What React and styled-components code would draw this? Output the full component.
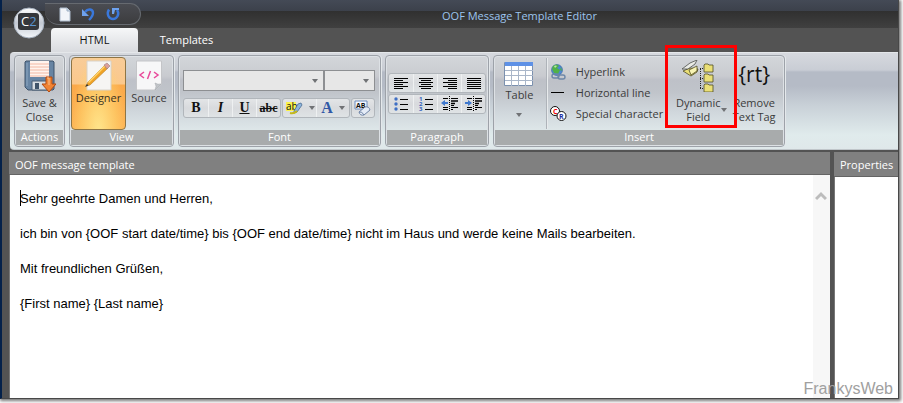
import {useState} from "react";
import styled, {createGlobalStyle, css} from "styled-components";

const GlobalStyle = createGlobalStyle`
  * {
    box-sizing: border-box;
  }

  body {
    margin: 0;
    background: #fff;
    font-family: "Open Sans", "Noto Sans", sans-serif;
    font-size: 11px;
    color: #3b3b3b;
    overflow: hidden;
  }

  button, select, textarea {
    margin: 0;
    padding: 0;
    border: 0;
    background: none;
    font: inherit;
    color: inherit;
  }

  svg {
    display: block;
    flex: none;
  }
`

const Desktop = styled.div`
  height: 100vh;
  padding: 0 4px 4px 0;
`

const Window = styled.div`
  position: relative;
  display: flex;
  flex-direction: column;
  height: 100%;
  border-left: 2px solid #04214a;
  border-right: 1px solid #484848;
  border-bottom: 1px solid #484848;
  background: #535353;
  box-shadow: 1px 1px 3px 1px #777;
`

const TitleBar = styled.header`
  display: flex;
  height: 28px;
  padding-left: 43px;
  background: linear-gradient(#444a56 0, #3c414b 11px, #303030 11px, #404040 28px);
`

const Orb = styled.button`
  position: absolute;
  left: 11px;
  top: 7px;
`

const QuickAccess = styled.div`
  display: flex;
  align-items: center;
  gap: 9px;
  width: 96px;
  height: 22px;
  margin-top: 3px;
  padding-left: 14px;
  border: 1px solid #666a70;
  border-left: 0;
  border-radius: 0 11px 11px 14px;
  background: linear-gradient(#4a4c52, #3c3c3e);
`

const Title = styled.h1`
  flex: 1;
  margin: 0;
  font-size: 11px;
  font-weight: 400;
  line-height: 32px;
  text-align: center;
  color: #9cc4ee;
`

const TabRow = styled.nav`
  display: flex;
  height: 24px;
  padding-left: 49px;
`

const Tab = styled.button`
  width: 87px;
  height: 24px;
  padding-bottom: 1px;
  border-radius: 4px 4px 0 0;
  color: ${(props) => (props.$active ? "#111" : "#fff")};
  background: ${(props) => (props.$active ? "linear-gradient(#f6f7f8, #d9dbdf)" : "none")};
  margin-right: 5px;
`

const Ribbon = styled.div`
  display: flex;
  gap: 4px;
  height: 98px;
  margin-left: 8px;
  padding: 2px 4px;
  border-top: 1px solid #e4e7ea;
  border-bottom: 1px solid #c0c6ca;
  border-radius: 4px 0 0 4px;
  background: linear-gradient(#d6d9de 0, #c9cdd5 17px, #b5bbc6 19px, #b5bbc6 33px, #c8d0d7 52px, #e0ebec 82px, #dfe8ea 100%);
`

const GroupBox = styled.section`
  display: flex;
  flex-direction: column;
  width: ${(props) => props.$width}px;
  flex: none;
  border: 1px solid #9da2a9;
  border-radius: 4px;
  box-shadow: inset 0 0 0 1px #dde1e5, 1px 0 0 #e4e8eb;
  background: linear-gradient(#d3d6da 0, #c9cbd0 20px, #bec1c8 24px, #c0c4ca 36px, #d0d7dc 56px, #dfe8ea 76px);
`

const GroupContent = styled.div`
  flex: 1;
  display: flex;
  padding: ${(props) => props.$padding || "1px 1px 0"};
`

const GroupLabel = styled.h2`
  height: 15px;
  margin: 0 1px 1px;
  font-size: 11px;
  font-weight: 400;
  line-height: 14px;
  text-align: center;
  color: #fff;
  background: #a8abac;
`

const BigButton = styled.button`
  display: flex;
  flex-direction: column;
  align-items: center;
  gap: ${(props) => (props.$twoLines ? 4 : 0)}px;
  width: ${(props) => props.$width}px;
  padding-top: 3px;
  line-height: 14px;
  white-space: nowrap;
  ${(props) => props.$active && css`
    border: 1px solid #8e7545;
    border-radius: 4px;
    padding-top: 2px;
    color: #3b3220;
    background: radial-gradient(ellipse at 50% 105%, #ffe68c 0, rgba(255, 214, 110, 0.5) 50%, transparent 75%),
      linear-gradient(#f8cc98 0, #fbc88c 26px, #fba94a 27px, #fdb355 100%);
  `}
`

const BigLabel = styled.span`
  position: relative;
`

const SideArrow = styled.span`
  position: absolute;
  right: -6px;
  top: 12px;
`

const TableArrow = styled.span`
  margin-top: 11px;
`

const FontRows = styled.div`
  display: flex;
  flex-direction: column;
  gap: 7px;
`

const Row = styled.div`
  display: flex;
  gap: ${(props) => props.$gap || 0}px;
`

const ComboBox = styled.label`
  position: relative;
  width: ${(props) => props.$width}px;
  height: 21px;
`

const Select = styled.select`
  appearance: none;
  width: 100%;
  height: 100%;
  border: 1px solid #8d8f92;
  border-radius: 0;
  background: #e7e7e7;
`

const ComboArrow = styled.span`
  position: absolute;
  right: 6px;
  top: 9px;
  pointer-events: none;
`

const Segment = styled.div`
  display: flex;
  height: 20px;
  border: 1px solid #b1b6bb;
  border-radius: 3px;
  background: linear-gradient(#e3e5e7, #d8dadd 50%, #dfe3e5);
`

const SmallButton = styled.button`
  display: flex;
  align-items: center;
  justify-content: center;
  gap: 6px;
  width: ${(props) => props.$width || 24}px;

  & + & {
    border-left: 1px solid #eef0f1;
  }
`

const Letter = styled.span`
  font-family: "Liberation Serif", serif;
  font-size: ${(props) => props.$size || 14}px;
  line-height: 16px;
  font-weight: 700;
  font-style: ${(props) => (props.$italic ? "italic" : "normal")};
  text-decoration: ${(props) => props.$line || "none"};
  color: ${(props) => props.$color || "#111"};
`

const ParagraphRows = styled.div`
  display: flex;
  flex-direction: column;
  gap: 1px;
`

const Separator = styled.div`
  flex: none;
  width: 2px;
  height: 71px;
  margin: 1px 2px 0 6px;
  border-left: 1px solid #aeb3b9;
  background: #e7eaec;
`

const InsertList = styled.div`
  display: flex;
  flex-direction: column;
  width: 115px;
  padding-top: 4px;
`

const InsertItem = styled.button`
  display: flex;
  align-items: center;
  gap: 9px;
  height: 21px;
  white-space: nowrap;
`

const Highlighted = styled.div`
  position: relative;
  display: flex;
  margin-left: 8px;
`

const RedFrame = styled.div`
  position: absolute;
  left: -7px;
  top: -12px;
  z-index: 1;
  width: 72px;
  height: 83px;
  border: 3px solid #f00;
  pointer-events: none;
`

const Tag = styled.span`
  height: 32px;
  font-size: 21px;
  font-weight: 500;
  line-height: 28px;
  color: #111;
`

const Panels = styled.main`
  flex: 1;
  display: flex;
  gap: 4px;
  min-height: 0;
  padding: 2px 0 0 7px;
`

const Panel = styled.section`
  display: flex;
  flex-direction: column;
  flex: ${(props) => (props.$width ? `0 0 ${props.$width}px` : "1")};
  min-width: 0;
`

const PanelTitle = styled.h2`
  height: ${(props) => props.$height}px;
  margin: 0;
  padding-left: 6px;
  border-bottom: 1px solid #646464;
  font-size: 11px;
  font-weight: 400;
  line-height: 26px;
  color: #fff;
  background: #808080;
  white-space: nowrap;
`

const PanelBody = styled.div`
  position: relative;
  flex: 1;
  display: flex;
  min-height: 0;
  border-left: 1px solid #777;
  background: #fff;
`

const Message = styled.textarea`
  flex: 1;
  padding: 6px 10px;
  border: 0;
  outline: 0;
  resize: none;
  overflow: hidden;
  font-family: "Liberation Sans", Arial, sans-serif;
  font-size: 13px;
  line-height: 35px;
  color: #000;
`

const Caret = styled.span`
  position: absolute;
  left: 10px;
  top: 15px;
  width: 1px;
  height: 16px;
  background: #000;
`

const ScrollTrack = styled.div`
  width: 17px;
  padding: 16px 0 0 2px;
  background: #f7f7f7;
`

const Watermark = styled.div`
  position: absolute;
  right: 5px;
  bottom: 0;
  font-family: "Liberation Sans", Arial, sans-serif;
  font-size: 16px;
  line-height: 18px;
  color: #a0a0a0;
`

const Arrow = () => (
    <svg width="6" height="4" viewBox="0 0 6 4">
        <path d="M0 0h6L3 4z" fill="#707275"/>
    </svg>
);

const OrbIcon = () => (
    <svg width="32" height="32" viewBox="0 0 32 32">
        <defs>
            <linearGradient id="orb" x1="0" y1="0" x2="0" y2="1">
                <stop offset="0" stopColor="#fff"/>
                <stop offset=".5" stopColor="#c3c9d2"/>
                <stop offset="1" stopColor="#f4f7fb"/>
            </linearGradient>
        </defs>
        <circle cx="16" cy="16" r="15" fill="url(#orb)" stroke="#a5b0be"/>
        <rect x="5" y="6" width="21" height="17" rx="3" fill="#35373b"/>
        <text x="8" y="19" fontSize="13" fontFamily="Open Sans, sans-serif" fill="#fff">
            C<tspan fill="#5b95d1">2</tspan>
        </text>
    </svg>
);

const NewIcon = () => (
    <svg width="12" height="16" viewBox="0 0 12 16">
        <path d="M1 2h7l3 3v10H1z" fill="#f2f5f9" stroke="#aebccd"/>
        <path d="M8 2v3h3" fill="#cbd6e2" stroke="#9eb0c4"/>
    </svg>
);

const UndoIcon = () => (
    <svg width="16" height="16" viewBox="0 0 16 16">
        <path d="M5 6c3-4 8-3 8 1 0 3-2 5-4 7" fill="none" stroke="#3a78dc" strokeWidth="2.4"/>
        <path d="M2 3v7h7z" fill="#6ea2ee"/>
    </svg>
);

const RedoIcon = () => (
    <svg width="16" height="16" viewBox="0 0 16 16">
        <path d="M4 3.500C1 8 4 13 8 13s7-5 4-9" fill="none" stroke="#3a78dc" strokeWidth="2.400"/>
        <path d="M7 2h7v2h-4l-1 4H7z" fill="#6ea2ee"/>
    </svg>
);

const SaveIcon = () => (
    <svg width="32" height="32" viewBox="0 0 32 32">
        <path d="M2 1h27l1 1v27l-1 1H4l-3-3V2z" fill="#6784a3" stroke="#3e536b"/>
        <path d="M3 3v23" stroke="#8fa8c2"/>
        <path d="M6 1h19v16H6z" fill="#fff4ee"/>
        <path d="M6 4h19M6 7h19M6 10h19M6 13h19M6 16h19" stroke="#f2b8a4"/>
        <path d="M8 21h16v9H8z" fill="#d8dde2" stroke="#485c73"/>
        <path d="M11 23h4v6h-4z" fill="#3f5369"/>
        <path d="M22 17h6v7h4l-7 8-7-8h4z" fill="#f08435" stroke="#b3490f"/>
        <path d="M23 18h2v7" fill="none" stroke="#fbc08c"/>
    </svg>
);

const DesignerIcon = () => (
    <svg width="32" height="31" viewBox="2 0 32 31">
        <path d="M6 1h24v29H6z" fill="#f6f5f3" stroke="#d8d2c8"/>
        <path d="M5 26l2-4L24 5l3 3L9 25z" fill="#f0a326" stroke="#b97c1d" strokeWidth=".6"/>
        <path d="M7 22L24 5l1 1L8 23z" fill="#ffd56e"/>
        <path d="M23 5l3-2 3 3-3 3z" fill="#dba09b" stroke="#9b8082" strokeWidth=".6"/>
        <path d="M4 27l2-3 1.500 1.500z" fill="#333"/>
    </svg>
);

const SourceIcon = () => (
    <svg width="26" height="31" viewBox="0 0 26 31">
        <path d="M.5 1h25v23l-6 6H.5z" fill="#f7f7f8" stroke="#c4c5c8"/>
        <path d="M25 24l-6 6q2-4 0-7 3 2 6 1" fill="#c1c4c8" stroke="#a6aaaf" strokeWidth=".6"/>
        <path d="M8 12l-4 3 4 3M18 12l4 3-4 3M14.500 11l-3 8" fill="none" stroke="#e8499a" strokeWidth="1.500"/>
    </svg>
);

const HighlightIcon = () => (
    <svg width="18" height="16" viewBox="0 0 18 16">
        <path d="M1 2h10v9H1z" fill="#fbf24c"/>
        <text x="1" y="10" fontSize="10" fontFamily="Open Sans, sans-serif" fill="#111">ab</text>
        <path d="M9 11l4-7 3-1 1 2-5 7-3 1z" fill="#8db4dc" stroke="#4b6d93" strokeWidth=".8"/>
        <path d="M5 13q4 1 7-2" fill="none" stroke="#c5b91c" strokeWidth="2"/>
    </svg>
);

const ClearIcon = () => (
    <svg width="18" height="18" viewBox="0 0 18 18">
        <path d="M1 2h12v8H1z" fill="#f4f8ff" stroke="#6d8cc0"/>
        <text x="2" y="9" fontSize="7" fontWeight="700" fontFamily="Open Sans, sans-serif" fill="#111">AB</text>
        <path d="M5 13l6-5q4-1 5 3l-6 5q-4 1-5-3z" fill="#e5ecf7" stroke="#7186a8"/>
        <path d="M5 13q3-1 5 3" fill="none" stroke="#7186a8"/>
    </svg>
);

const alignPaths = {
    left: "M1 1.500h14M1 3.500h9M1 5.500h14M1 7.500h9M1 9.500h14M1 11.500h9",
    center: "M1 1.500h14M3 3.500h10M1 5.500h14M3 7.500h10M1 9.500h14M3 11.500h10",
    right: "M1 1.500h14M6 3.500h9M1 5.500h14M6 7.500h9M1 9.500h14M6 11.500h9",
    justify: "M1 1.500h14M1 3.500h14M1 5.500h14M1 7.500h14M1 9.500h14M1 11.500h14",
};

const AlignIcon = ({kind}) => (
    <svg width="16" height="13" viewBox="0 0 16 13">
        <path d={alignPaths[kind]} stroke="#000"/>
    </svg>
);

const BulletsIcon = () => (
    <svg width="16" height="16" viewBox="0 0 16 16">
        <g fill="#3f6fc4">
            <circle cx="3" cy="3" r="1.700"/>
            <circle cx="3" cy="8" r="1.700"/>
            <circle cx="3" cy="13" r="1.700"/>
        </g>
        <path d="M7 3.500h8M7 8.500h8M7 13.500h8" stroke="#000"/>
    </svg>
);

const NumbersIcon = () => (
    <svg width="16" height="16" viewBox="0 0 16 16">
        <g fontSize="6" fontWeight="700" fontFamily="Open Sans, sans-serif" fill="#3465bd">
            <text x="1" y="5">1</text>
            <text x="1" y="10">2</text>
            <text x="1" y="15">3</text>
        </g>
        <path d="M7 3.500h8M7 8.500h8M7 13.500h8" stroke="#000"/>
    </svg>
);

const IndentIcon = ({outdent}) => (
    <svg width="18" height="16" viewBox="0 0 18 16">
        <path d="M2 2.500h5M10 2.500h7M2 11.500h5M10 11.500h7M2 13.500h5M10 13.500h2M10 9.500h3" stroke="#000"/>
        <path d="M10 5h7M10 7.500h4" stroke="#000" strokeWidth="1.600"/>
        <path d="M8.500 0v16" stroke="#000" strokeDasharray="1 1"/>
        <path d={outdent ? "M0 7l4-3v2h3v2H4v2z" : "M7 7L3 4v2H0v2h3v2z"} fill="#3f78cd"/>
    </svg>
);

const TableIcon = () => (
    <svg width="30" height="28" viewBox="0 0 30 28">
        <path d="M.5 2.500h28v23H.5z" fill="#fff" stroke="#7b90ae"/>
        <path d="M1 2h28v4H1z" fill="#5e91e6"/>
        <path d="M1 10.500h28M1 15.500h28M1 20.500h28M7.500 6v20M14.500 6v20M21.500 6v20" stroke="#a9b6c9"/>
    </svg>
);

const GlobeIcon = () => (
    <svg width="17" height="17" viewBox="0 0 17 17">
        <circle cx="7" cy="7" r="5.500" fill="#4e87d2" stroke="#3867a0" strokeWidth=".6"/>
        <path d="M3 3q4-3 6 0L7 5l3 2-2 4-4-1-2-4zM11 4l1 4-2-1z" fill="#51b148"/>
        <path d="M4 3q2-1 3 0L5 5z" fill="#b6e9a4"/>
        <g fill="none" stroke="#6d87a8" strokeWidth="1.400">
            <rect x="2" y="11" width="7" height="4" rx="2"/>
            <rect x="8" y="12" width="7" height="4" rx="2"/>
        </g>
    </svg>
);

const LineIcon = () => (
    <svg width="17" height="17" viewBox="0 0 17 17">
        <path d="M1 8.500h13" stroke="#000"/>
    </svg>
);

const SpecialIcon = () => (
    <svg width="17" height="17" viewBox="0 0 17 17">
        <g fontSize="7" fontWeight="700" fontFamily="Open Sans, sans-serif">
            <circle cx="5" cy="6" r="4.500" fill="#fff" stroke="#111"/>
            <text x="3" y="9" fill="#e00">C</text>
            <circle cx="11.500" cy="11" r="4.500" fill="#fff" stroke="#111"/>
            <text x="9" y="14" fill="#1a2fa0">R</text>
        </g>
    </svg>
);

const FieldIcon = () => (
    <svg width="32" height="32" viewBox="0 0 32 32">
        <path d="M18.500 9v20M18 8.500h4M18 18.500h4M18 28.500h4" stroke="#222" strokeDasharray="1 1"/>
        <g fill="#eadf76" stroke="#4f4b23" strokeWidth=".8">
            <path d="M22 6V5l1-1h3l1 1h4v7h-9z"/>
            <path d="M22 16v-1l1-1h3l1 1h4v7h-9z"/>
            <path d="M22 26v-1l1-1h3l1 1h4v7h-9z"/>
            <path d="M1 11l7-3 8 1-1 3-6 4z"/>
        </g>
        <path d="M0 9l8-6 7-3-2 4-7 5z" fill="#e9ebe6" stroke="#4d4f4b" strokeWidth=".8"/>
        <path d="M7 10l8-4v5l-6 4z" fill="#f8f4b4" stroke="#4f4b23" strokeWidth=".8"/>
    </svg>
);

const Group = ({label, width, padding, children}) => (
    <GroupBox $width={width} aria-label={label}>
        <GroupContent $padding={padding}>{children}</GroupContent>
        <GroupLabel>{label}</GroupLabel>
    </GroupBox>
);

const MESSAGE = `Sehr geehrte Damen und Herren,
ich bin von {OOF start date/time} bis {OOF end date/time} nicht im Haus und werde keine Mails bearbeiten.
Mit freundlichen Grüßen,
{First name} {Last name}`;

const App = () => {
    const [tab, setTab] = useState("HTML");
    const [view, setView] = useState("Designer");
    const [message, setMessage] = useState(MESSAGE);

    return (
        <>
            <GlobalStyle/>
            <Desktop>
                <Window>
                    <TitleBar>
                        <QuickAccess>
                            <button aria-label="New"><NewIcon/></button>
                            <button aria-label="Undo"><UndoIcon/></button>
                            <button aria-label="Redo"><RedoIcon/></button>
                        </QuickAccess>
                        <Title>OOF Message Template Editor</Title>
                    </TitleBar>
                    <Orb aria-label="Application menu"><OrbIcon/></Orb>
                    <TabRow>
                        {["HTML", "Templates"].map((name) => (
                            <Tab key={name} $active={tab === name} onClick={() => setTab(name)}>{name}</Tab>
                        ))}
                    </TabRow>
                    <Ribbon>
                        <Group label="Actions" width={51}>
                            <BigButton $width={47} $twoLines>
                                <SaveIcon/>
                                <span>Save &amp;<br/>Close</span>
                            </BigButton>
                        </Group>
                        <Group label="View" width={105}>
                            <BigButton $width={55} $active={view === "Designer"} onClick={() => setView("Designer")}>
                                <DesignerIcon/>
                                Designer
                            </BigButton>
                            <BigButton $width={46} $active={view === "Source"} onClick={() => setView("Source")}>
                                <SourceIcon/>
                                Source
                            </BigButton>
                        </Group>
                        <Group label="Font" width={203} padding="14px 4px 0">
                            <FontRows>
                                <Row>
                                    <ComboBox $width={141}>
                                        <Select aria-label="Font family"/>
                                        <ComboArrow><Arrow/></ComboArrow>
                                    </ComboBox>
                                    <ComboBox $width={51}>
                                        <Select aria-label="Font size"/>
                                        <ComboArrow><Arrow/></ComboArrow>
                                    </ComboBox>
                                </Row>
                                <Row $gap={1}>
                                    <Segment>
                                        <SmallButton><Letter>B</Letter></SmallButton>
                                        <SmallButton><Letter $italic>I</Letter></SmallButton>
                                        <SmallButton><Letter $line="underline">U</Letter></SmallButton>
                                        <SmallButton><Letter $line="line-through" $size={12}>abc</Letter></SmallButton>
                                    </Segment>
                                    <Segment>
                                        <SmallButton $width={33} aria-label="Highlight"><HighlightIcon/><Arrow/></SmallButton>
                                        <SmallButton $width={33}><Letter $color="#3158a6" $size={16}>A</Letter><Arrow/></SmallButton>
                                    </Segment>
                                    <Segment>
                                        <SmallButton $width={22} aria-label="Clear formatting"><ClearIcon/></SmallButton>
                                    </Segment>
                                </Row>
                            </FontRows>
                        </Group>
                        <Group label="Paragraph" width={104} padding="17px 2px 0">
                            <ParagraphRows>
                                <Segment>
                                    {["left", "center", "right", "justify"].map((kind) => (
                                        <SmallButton key={kind} aria-label={`Align ${kind}`}><AlignIcon kind={kind}/></SmallButton>
                                    ))}
                                </Segment>
                                <Segment>
                                    <SmallButton aria-label="Bullets"><BulletsIcon/></SmallButton>
                                    <SmallButton aria-label="Numbering"><NumbersIcon/></SmallButton>
                                    <SmallButton aria-label="Outdent"><IndentIcon outdent/></SmallButton>
                                    <SmallButton aria-label="Indent"><IndentIcon/></SmallButton>
                                </Segment>
                            </ParagraphRows>
                        </Group>
                        <Group label="Insert" width={292} padding="1px 0 0 5px">
                            <BigButton $width={41}>
                                <TableIcon/>
                                <BigLabel>Table</BigLabel>
                                <TableArrow><Arrow/></TableArrow>
                            </BigButton>
                            <Separator/>
                            <InsertList>
                                <InsertItem><GlobeIcon/>Hyperlink</InsertItem>
                                <InsertItem><LineIcon/>Horizontal line</InsertItem>
                                <InsertItem><SpecialIcon/>Special character</InsertItem>
                            </InsertList>
                            <Highlighted>
                                <BigButton $width={52} $twoLines>
                                    <FieldIcon/>
                                    <BigLabel>
                                        Dynamic<br/>Field
                                        <SideArrow><Arrow/></SideArrow>
                                    </BigLabel>
                                </BigButton>
                                <RedFrame/>
                            </Highlighted>
                            <BigButton $width={60} $twoLines>
                                <Tag>{"{rt}"}</Tag>
                                <span>Remove<br/>Text Tag</span>
                            </BigButton>
                        </Group>
                    </Ribbon>
                    <Panels>
                        <Panel>
                            <PanelTitle as="label" htmlFor="message" $height={23}>OOF message template</PanelTitle>
                            <PanelBody>
                                <Message id="message" value={message} onChange={(e) => setMessage(e.target.value)}/>
                                <Caret/>
                                <ScrollTrack>
                                    <svg width="12" height="10" viewBox="0 0 12 10">
                                        <path d="M1 8l5-5 5 5" fill="none" stroke="#bcbcbc" strokeWidth="3"/>
                                    </svg>
                                </ScrollTrack>
                            </PanelBody>
                        </Panel>
                        <Panel $width={64}>
                            <PanelTitle $height={25}>Properties</PanelTitle>
                            <PanelBody/>
                        </Panel>
                    </Panels>
                    <Watermark>FrankysWeb</Watermark>
                </Window>
            </Desktop>
        </>
    );
};

export default App;
